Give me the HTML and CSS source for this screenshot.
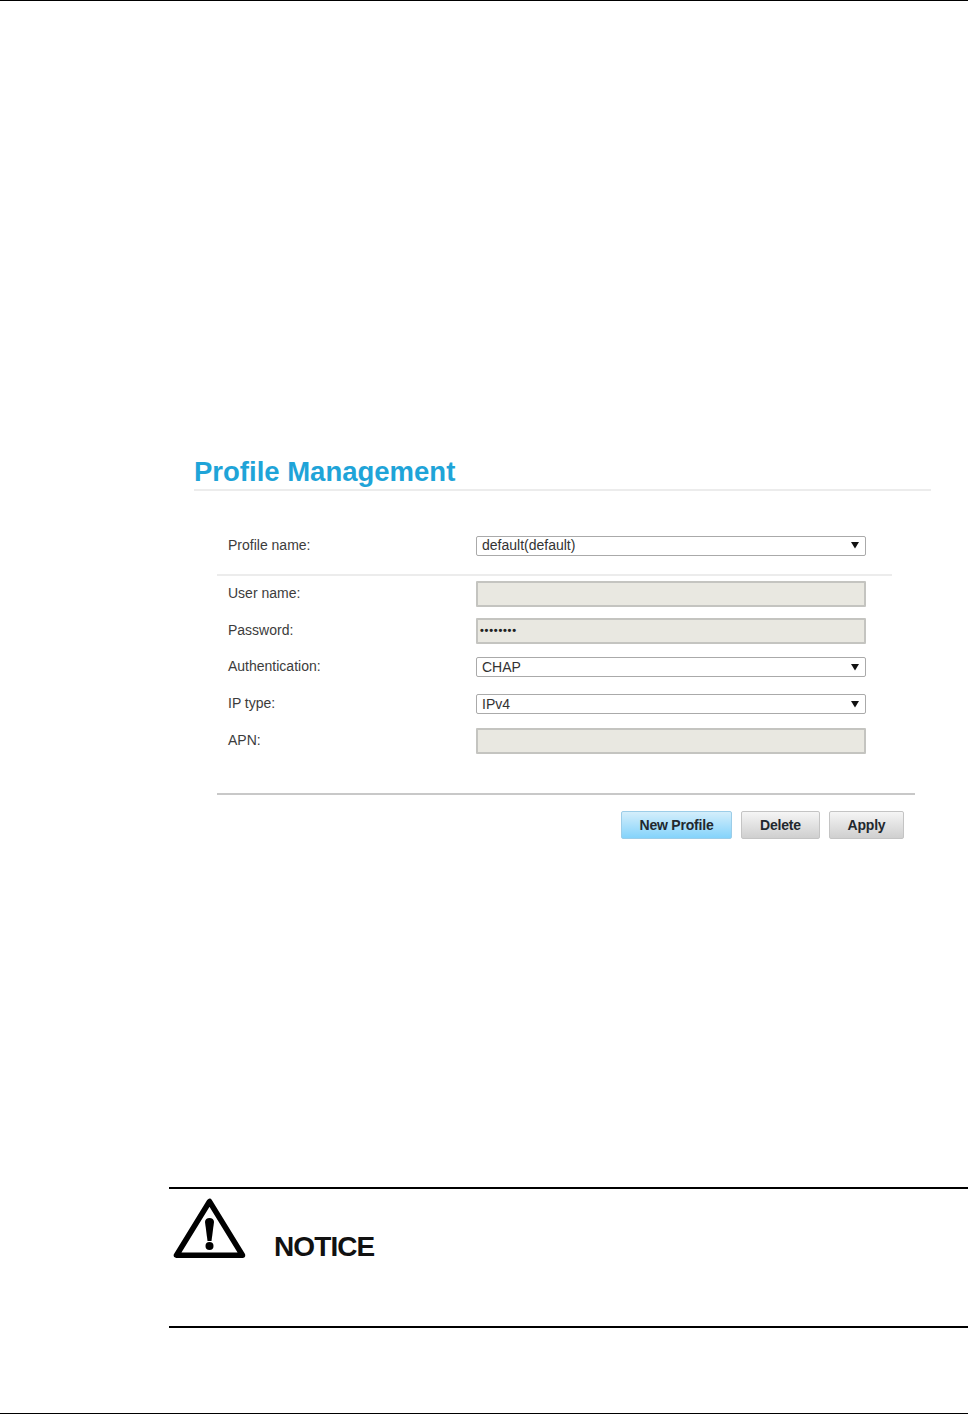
FILE: index.html
```html
<!DOCTYPE html>
<html lang="en">
<head>
<meta charset="utf-8">
<title>Profile Management</title>
<link rel="stylesheet" href="styles.css">
</head>
<body>
<div class="page">
  <section class="panel">
    <h1 class="title">Profile Management</h1>
    <div class="form">
      <div class="row row-first">
        <span class="label">Profile name:</span>
        <div class="field select"><span>default(default)</span><svg class="arrow" width="8" height="8" viewBox="0 0 8 8"><path d="M0 1h8L4 7.5z"/></svg></div>
      </div>
      <div class="divider"></div>
      <div class="row row-input">
        <span class="label">User name:</span>
        <div class="field input"></div>
      </div>
      <div class="row row-input">
        <span class="label">Password:</span>
        <div class="field input dots">&#8226;&#8226;&#8226;&#8226;&#8226;&#8226;&#8226;&#8226;</div>
      </div>
      <div class="row row-select">
        <span class="label">Authentication:</span>
        <div class="field select"><span>CHAP</span><svg class="arrow" width="8" height="8" viewBox="0 0 8 8"><path d="M0 1h8L4 7.5z"/></svg></div>
      </div>
      <div class="row row-select">
        <span class="label">IP type:</span>
        <div class="field select"><span>IPv4</span><svg class="arrow" width="8" height="8" viewBox="0 0 8 8"><path d="M0 1h8L4 7.5z"/></svg></div>
      </div>
      <div class="row row-input">
        <span class="label">APN:</span>
        <div class="field input"></div>
      </div>
    </div>
    <div class="actions">
      <button class="btn btn-primary" type="button">New Profile</button>
      <button class="btn btn-delete" type="button">Delete</button>
      <button class="btn btn-apply" type="button">Apply</button>
    </div>
  </section>
  <section class="notice">
    <svg class="notice-icon" width="74" height="62" viewBox="0 0 74 62">
      <path d="M36.500 4.500 3.500 58.200h66z" fill="none" stroke="#000" stroke-width="5.500" stroke-linejoin="round"/>
      <path d="M32 25c0-2.500 2-4 4.500-4s4.500 1.500 4.500 4L38.500 44h-4z" fill="#000"/>
      <circle cx="36.500" cy="49" r="4" fill="#000"/>
    </svg>
    <span class="notice-text">NOTICE</span>
  </section>
</div>
</body>
</html>
```
FILE: styles.css
```css
* {
  box-sizing: border-box;
}

html, body {
  margin: 0;
  padding: 0;
  background: #fff;
}

.page {
  width: 968px;
  height: 1414px;
  border-top: 1px solid #000;
  border-bottom: 1px solid #000;
  font-family: "Liberation Sans", Arial, sans-serif;
  overflow: hidden;
}

.panel {
  margin: 454px 37px 0 194px;
}

.title {
  margin: 0;
  height: 36px;
  line-height: 33px;
  font-size: 27.500px;
  font-weight: bold;
  color: #1fa4d8;
  border-bottom: 2px solid #ececec;
}

.form {
  margin: 45px 39px 0 23px;
  padding-left: 11px;
}

.row {
  display: grid;
  grid-template-columns: 248px 390px;
  align-items: center;
  font-size: 14px;
  color: #3c3c3c;
}

.label {
  padding-bottom: 2px;
}

.row-first {
  height: 20px;
}

.row-first .select {
  padding-bottom: 2px;
}

.divider {
  height: 2px;
  margin: 18px 0 5px -11px;
  background: #ececec;
}

.row-input {
  height: 26px;
  margin-bottom: 11px;
}

.row-select {
  height: 20px;
  margin-top: 13px;
  margin-bottom: 14px;
}

.row-select + .row-select {
  margin-top: 17px;
}

.field {
  height: 100%;
  border-radius: 2px;
  font-size: 14px;
  color: #333;
}

.select {
  display: flex;
  align-items: center;
  justify-content: space-between;
  padding: 0 6px 0 5px;
  background: #fff;
  border: 1px solid #aaa;
}

.arrow {
  fill: #111;
}

.input {
  background: #e9e8e1;
  border: 2px solid #c4c4c0;
  border-radius: 1px;
}

.dots {
  display: flex;
  align-items: center;
  padding: 0 0 2px 2px;
  font-size: 11px;
  font-weight: bold;
  letter-spacing: 0.750px;
  color: #222;
}

.actions {
  display: flex;
  justify-content: flex-end;
  gap: 9px;
  margin: 39px 16px 0 23px;
  padding: 16px 11px 0 0;
  border-top: 2px solid #c8c8c8;
  height: 46px;
}

.btn {
  height: 28px;
  padding: 0;
  font-family: inherit;
  font-size: 14px;
  font-weight: bold;
  letter-spacing: -0.2px;
  color: #22282e;
  border: 1px solid #c4c4c4;
  border-radius: 2px;
  background: linear-gradient(#f5f5f5, #cfcfcf);
}

.btn-primary {
  width: 111px;
  border-color: #9ccde8;
  background: linear-gradient(#d4eefb, #84d3fb);
}

.btn-delete {
  width: 79px;
}

.btn-apply {
  width: 75px;
}

.notice {
  display: flex;
  align-items: flex-start;
  height: 141px;
  margin: 348px 0 0 169px;
  padding: 8px 0 0 4px;
  border-top: 2px solid #000;
  border-bottom: 2px solid #000;
}

.notice-icon {
  flex: none;
}

.notice-text {
  margin: 32px 0 0 27px;
  font-size: 28px;
  line-height: 36px;
  font-weight: bold;
  font-kerning: none;
  letter-spacing: -0.900px;
  color: #111;
}
```
